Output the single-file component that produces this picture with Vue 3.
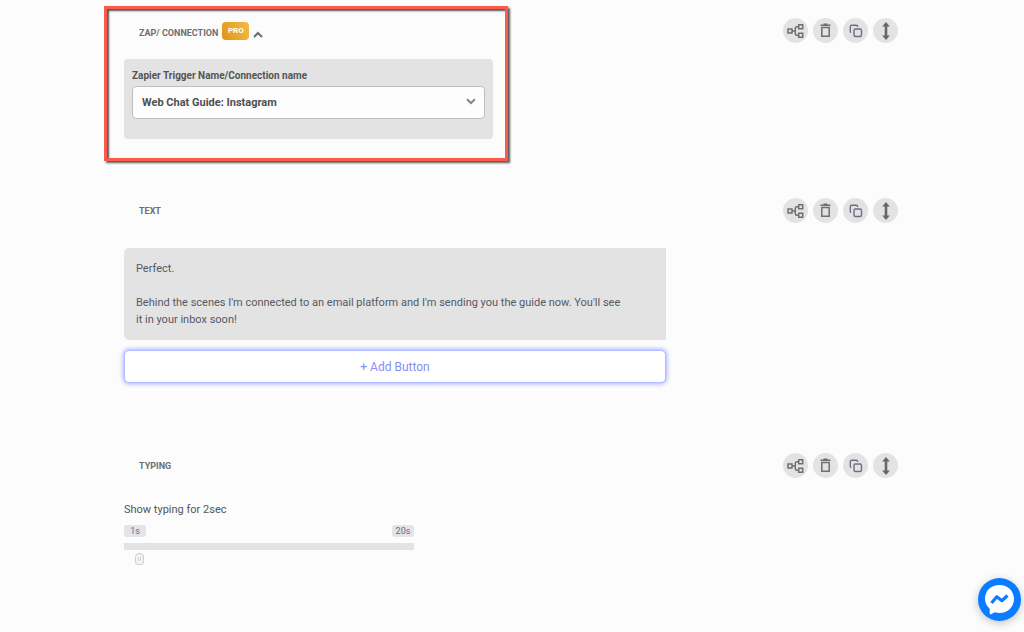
<script setup>
import { ref } from 'vue'

const connections = ['Web Chat Guide: Instagram']
const connection = ref(connections[0])
const seconds = ref(2)
const message = ref(
  "Perfect.\n\nBehind the scenes I'm connected to an email platform and I'm sending you the guide now. You'll see it in your inbox soon!"
)

const blocks = [
  { id: 'zap', title: 'ZAP/ CONNECTION' },
  { id: 'text', title: 'TEXT' },
  { id: 'typing', title: 'TYPING' }
]
const actions = ['Connect', 'Delete', 'Duplicate', 'Move']
</script>

<template>
  <main class="page">
    <section v-for="block in blocks" :key="block.id" class="block" :class="block.id">
      <div class="body">
        <header class="head">
          <h2 class="title">{{ block.title }}</h2>
          <template v-if="block.id === 'zap'">
            <span class="pro">PRO</span>
            <button class="collapse" type="button" aria-label="Collapse">
              <svg width="10" height="7" viewBox="0 0 10 7"><path d="M1 6 5 2l4 4" fill="none" stroke="#6c6c6c" stroke-width="2" /></svg>
            </button>
          </template>
        </header>

        <div v-if="block.id === 'zap'" class="panel">
          <label class="label" for="connection">Zapier Trigger Name/Connection name</label>
          <div class="select-wrap">
            <select id="connection" v-model="connection" class="select">
              <option v-for="name in connections" :key="name">{{ name }}</option>
            </select>
            <svg class="chevron" width="10" height="7" viewBox="0 0 10 7"><path d="M1 1.2 5 5l4-3.8" fill="none" stroke="#858585" stroke-width="2" /></svg>
          </div>
        </div>

        <template v-else-if="block.id === 'text'">
          <textarea v-model="message" class="message" aria-label="Message text" spellcheck="false"></textarea>
          <button class="add" type="button">+ Add Button</button>
        </template>

        <div v-else class="delay">
          <label class="caption" for="delay">Show typing for {{ seconds }}sec</label>
          <div class="limits"><span>1s</span><span>20s</span></div>
          <div class="track"></div>
          <input id="delay" v-model="seconds" class="range" type="range" min="1" max="20" />
        </div>
      </div>

      <div class="actions">
        <button v-for="action in actions" :key="action" class="action" type="button" :aria-label="action">
          <svg v-if="action === 'Connect'" width="18" height="16" viewBox="0 0 18 16" fill="none" stroke="#6b7074" stroke-width="1.5">
            <path d="M1 6h4v4H1zM11.7 1.7h4v4h-4zM11.7 10.3h4v4h-4zM5 8h3.3M11.7 3.7H10Q8.3 3.7 8.3 5.2v5.6q0 1.5 1.7 1.5h1.7" />
          </svg>
          <svg v-else-if="action === 'Delete'" width="12" height="15" viewBox="0 0 12 15" fill="none" stroke="#6b7074" stroke-width="1.5">
            <path d="M.5 2.2h10M3.5 1.2h4M1.8 4.5h7.4v8.7H1.8z" />
          </svg>
          <svg v-else-if="action === 'Duplicate'" width="14" height="14" viewBox="0 0 14 14" fill="none" stroke="#6d6d88" stroke-width="1.4">
            <rect x="5" y="5" width="7.5" height="7.5" rx="1.5" />
            <path d="M2.2 8.6Q1.3 8.3 1.3 7.3V2.6q0-1.3 1.3-1.3h4.7q1.3 0 1.3 1.3V3" />
          </svg>
          <svg v-else width="8" height="18" viewBox="0 0 8 18">
            <path d="M4 0 7.8 4.5H5.3v9h2.5L4 18 .2 13.5h2.5v-9H.2z" fill="#62686c" />
          </svg>
        </button>
      </div>
    </section>

    <button class="messenger" type="button" aria-label="Open Messenger chat">
      <svg width="43" height="43" viewBox="0 0 43 43">
        <path d="M21.5 7C13.2 7 7 12.7 7 20.6c0 4.1 1.8 7.7 4.7 10.1v4.6c0 .8.8 1.3 1.5.9l3.5-1.9c1.5.4 3.1.6 4.8.6C29.8 34.9 36 28.7 36 20.9S29.8 7 21.5 7z" fill="#fff" />
        <path d="M13.5 25l5.3-6.3 5.2 4 5.5-5.2" fill="none" stroke="#0a7cff" stroke-width="3.2" stroke-linejoin="round" />
      </svg>
    </button>
  </main>
</template>

<style>
body {
  background: #fcfcfc;
}
</style>

<style scoped>
.page {
  box-sizing: border-box;
  min-height: 100vh;
  padding: 6px 126px 48px 124px;
  font-family: Roboto, "Liberation Sans", sans-serif;
  font-size: 12px;
  color: #555962;
}

.page * {
  box-sizing: border-box;
}

button,
select,
textarea,
input {
  font: inherit;
  margin: 0;
}

.block {
  display: flex;
  align-items: flex-start;
  justify-content: space-between;
  gap: 24px;
}

.body {
  flex: 0 1 542px;
  min-width: 0;
}

.head {
  display: flex;
  align-items: center;
  gap: 4px;
  height: 25px;
  padding: 2px 0 0 15px;
}

.title {
  margin: 0;
  font-size: 9px;
  line-height: 13px;
  font-weight: 700;
  color: #6e6e6e;
}

.zap .body {
  flex-basis: 404px;
  margin-left: -20px;
  padding: 11px 12px 19px 17px;
  border: 3px solid #fc5b4c;
  box-shadow: 2px 2px 2px #555, inset 2px 2px 2px #555;
}

.pro {
  width: 27px;
  height: 18px;
  margin-bottom: 6px;
  border-radius: 4px;
  background: linear-gradient(60deg, #df9215, #f5bd48);
  color: #fff;
  font-size: 8px;
  line-height: 17px;
  font-weight: 700;
  text-align: center;
}

.collapse {
  display: flex;
  padding: 1px 0 0;
  border: 0;
  background: none;
}

.panel {
  margin-top: 14px;
  padding: 10px 8px 20px;
  border-radius: 4px;
  background: #e3e3e3;
}

.label {
  display: block;
  font-size: 10px;
  line-height: 14px;
  font-weight: 700;
  color: #555;
}

.select-wrap {
  position: relative;
  margin-top: 3px;
}

.select {
  display: block;
  width: 100%;
  height: 33px;
  padding: 0 28px 0 9px;
  appearance: none;
  border: 1px solid #bfbfbf;
  border-radius: 4px;
  background: #fdfdfd;
  color: #4f4f4f;
  font-size: 11px;
  font-weight: 700;
}

.chevron {
  position: absolute;
  top: 12px;
  right: 9px;
  pointer-events: none;
}

.text {
  margin-top: 37px;
}

.message {
  display: block;
  width: 100%;
  height: 92px;
  margin-top: 25px;
  padding: 12px 40px 12px 12px;
  border: 0;
  border-radius: 5px 0 0 5px;
  background: #e3e3e3;
  color: #555962;
  font-size: 11px;
  line-height: 17px;
  resize: none;
  overflow: hidden;
}

.add {
  display: block;
  width: 100%;
  height: 33px;
  margin-top: 10px;
  padding: 0;
  border: 1px solid #b3bcff;
  border-radius: 5px;
  background: #fff;
  box-shadow: 0 0 4px 1px #a5b0ff;
  color: #8490f8;
  font-size: 12px;
}

.typing {
  margin-top: 70px;
}

.delay {
  width: 290px;
  max-width: 100%;
  padding-top: 24px;
}

.caption {
  display: block;
  font-size: 11px;
  line-height: 16px;
  color: #555;
}

.limits {
  display: flex;
  justify-content: space-between;
  margin-top: 7px;
}

.limits span {
  width: 22px;
  border-radius: 3px;
  background: #e3e3e9;
  color: #6c6c74;
  font-size: 9px;
  line-height: 12px;
  text-align: center;
}

.track {
  height: 7px;
  margin-top: 6px;
  background: #e3e3e3;
}

.range {
  display: block;
  width: calc(100% + 8px);
  height: 13px;
  margin: 2px -4px 0;
  appearance: none;
  background: none;
}

.range::-webkit-slider-thumb {
  appearance: none;
  width: 9px;
  height: 12px;
  border: 1px solid #cfcfd2;
  border-radius: 4px 4px 3px 3px;
  background: linear-gradient(90deg, #f4f4f5 2px, #d2d2d5 2px, #d2d2d5 3px, #f4f4f5 3px, #f4f4f5 4px, #d2d2d5 4px, #d2d2d5 5px, #f4f4f5 5px) center / 7px 4px no-repeat #f4f4f5;
}

.actions {
  display: flex;
  flex: none;
  gap: 5px;
}

.zap .actions {
  margin-top: 12px;
}

.action {
  display: flex;
  align-items: center;
  justify-content: center;
  width: 25px;
  height: 25px;
  padding: 0;
  border: 0;
  border-radius: 50%;
  background: #e3e3e3;
}

.messenger {
  position: fixed;
  right: 3px;
  bottom: 11px;
  display: flex;
  padding: 0;
  border: 0;
  border-radius: 50%;
  background: #0a7cff;
  box-shadow: 0 2px 8px #0000003d;
}
</style>
